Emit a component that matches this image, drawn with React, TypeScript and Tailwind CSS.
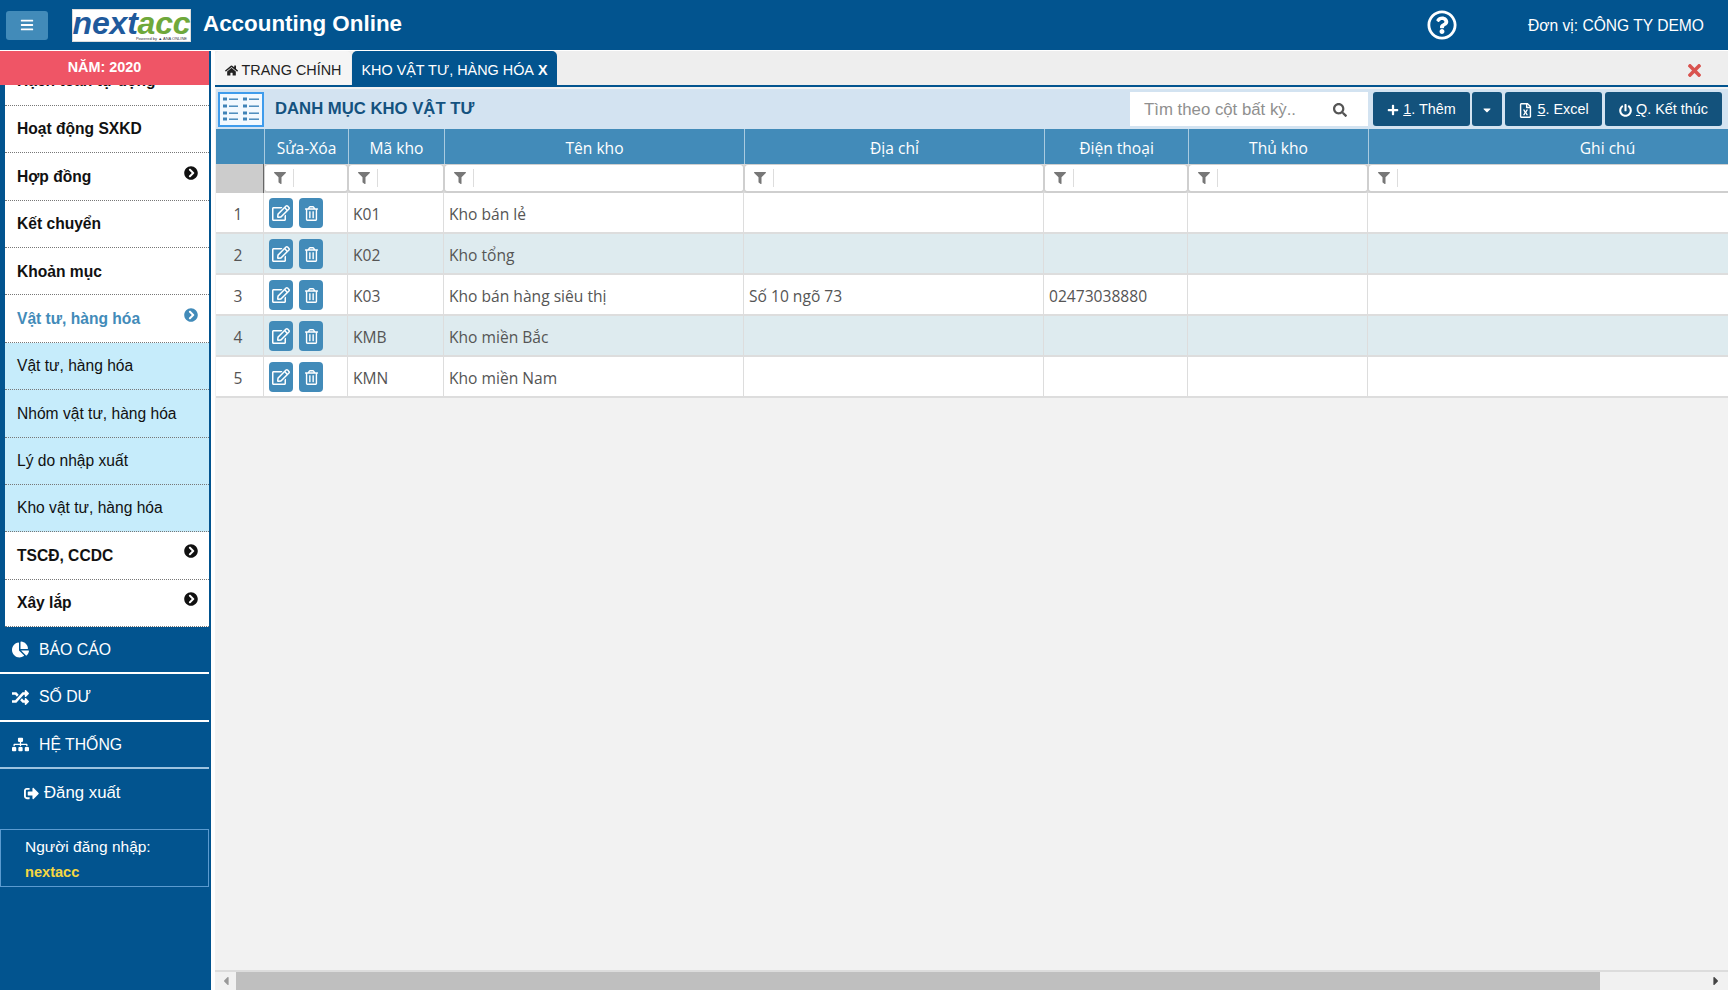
import React from "react";
import {
  FaBars, FaHome, FaPlus, FaPowerOff, FaSearch, FaTimes, FaFilter, FaChevronCircleRight,
  FaChartPie, FaRandom, FaSitemap, FaSignOutAlt, FaRegEdit, FaRegTrashAlt, FaRegFileExcel,
  FaRegQuestionCircle, FaCaretDown, FaCaretLeft, FaCaretRight,
} from "react-icons/fa";

const arial = "font-['Liberation_Sans',Arial,sans-serif]";
const grid = "grid grid-cols-[48px_84px_96px_300px_300px_144px_180px_478px] w-[1630px]";
const rowGrid = "grid grid-cols-[47px_84px_96px_300px_300px_144px_180px_479px] w-[1630px]";

const menu: { label: string; arrow?: boolean; active?: boolean; sub?: boolean }[] = [
  { label: "Hoạt động SXKD" },
  { label: "Hợp đồng", arrow: true },
  { label: "Kết chuyển" },
  { label: "Khoản mục" },
  { label: "Vật tư, hàng hóa", arrow: true, active: true },
  { label: "Vật tư, hàng hóa", sub: true },
  { label: "Nhóm vật tư, hàng hóa", sub: true },
  { label: "Lý do nhập xuất", sub: true },
  { label: "Kho vật tư, hàng hóa", sub: true },
  { label: "TSCĐ, CCDC", arrow: true },
  { label: "Xây lắp", arrow: true },
];

const sections = [
  { label: "BÁO CÁO", Icon: FaChartPie },
  { label: "SỐ DƯ", Icon: FaRandom },
  { label: "HỆ THỐNG", Icon: FaSitemap },
];

const columns = ["", "Sửa-Xóa", "Mã kho", "Tên kho", "Địa chỉ", "Điện thoại", "Thủ kho", "Ghi chú"];

const rows = [
  ["K01", "Kho bán lẻ", "", ""],
  ["K02", "Kho tổng", "", ""],
  ["K03", "Kho bán hàng siêu thị", "Số 10 ngõ 73", "02473038880"],
  ["KMB", "Kho miền Bắc", "", ""],
  ["KMN", "Kho miền Nam", "", ""],
];

function MenuRow({ item }: { item: (typeof menu)[number] }) {
  const tone = item.sub
    ? "bg-[#c6ecfb] text-[#111] font-normal"
    : item.active
      ? "bg-white text-[#428bb9] font-bold"
      : "bg-white text-[#111] font-bold";
  return (
    <div className={`h-[47.36px] flex items-center justify-between pl-3 pr-[11px] border-b border-dotted border-[#777] text-[15.6px] ${tone}`}>
      <span>{item.label}</span>
      {item.arrow && <FaChevronCircleRight className="text-[14px] -mt-2" />}
    </div>
  );
}

function Sidebar() {
  return (
    <aside className={`w-[211px] shrink-0 bg-[#02548f] flex flex-col ${arial}`}>
      <div className="h-[34px] shrink-0 w-[209px] bg-[#ef5566] text-white font-bold text-[14.4px] flex items-center justify-center">
        NĂM: 2020
      </div>
      <div className="ml-[5px] w-[204px] h-[542px] shrink-0 overflow-hidden">
        <div className="h-[21px] overflow-hidden flex items-end pl-3 border-b border-dotted border-[#777] bg-white text-[15.6px] font-bold text-[#111]">
          <span className="leading-[18px] mb-[15px] whitespace-nowrap">Hạch toán tự động</span>
        </div>
        {menu.map((m, i) => (
          <MenuRow key={i} item={m} />
        ))}
      </div>
      <div className="w-[209px]">
        {sections.map(({ label, Icon }, i) => (
          <div
            key={label}
            className={`h-[47.36px] flex items-center pl-3 text-white text-[15.8px] border-b-2 ${i === 2 ? "border-[#9cc3e0]" : "border-white"}`}
          >
            <Icon className="text-[17px] w-[17px] mr-[10px]" />
            <span>{label}</span>
          </div>
        ))}
      </div>
      <div className="h-[48px] pl-6 flex items-center text-white text-[16.8px] gap-[5px]">
        <FaSignOutAlt className="text-[15px]" />
        <span>Đăng xuất</span>
      </div>
      <div className="mt-[12px] w-[209px] h-[58px] border border-[#5b9bd0] pl-[24px] text-[15.5px] text-white">
        <div className="mt-[7px] leading-[20px]">Người đăng nhập:</div>
        <div className="mt-[6px] leading-[18px] text-[14.6px] font-bold text-[#f5d742]">nextacc</div>
      </div>
    </aside>
  );
}

function ListIcon() {
  return (
    <div className="w-[46px] h-[35px] bg-[#f2f9ff] border-2 border-[#3f9cec] flex items-center justify-center shrink-0">
      <svg width="38" height="26" viewBox="0 0 38 26" fill="#3f83b8">
        {[3, 10, 17, 23].map((y) => (
          <g key={y}>
            <rect x="1" y={y - 1.5} width="4" height="3" />
            <rect x="7" y={y - 0.5} width="9" height="1.4" />
            <rect x="21" y={y - 1.5} width="4" height="3" />
            <rect x="27" y={y - 0.5} width="10" height="1.4" />
          </g>
        ))}
      </svg>
    </div>
  );
}

function ToolBtn({ children, className = "" }: { children: React.ReactNode; className?: string }) {
  return (
    <button className={`h-[34px] rounded-[3px] bg-[#13527c] text-white text-[14.4px] flex items-center justify-center pt-[2px] ${className}`}>
      {children}
    </button>
  );
}

function Toolbar() {
  return (
    <div className={`mt-[2px] ml-[1px] h-[40px] bg-[#d3e3f1] flex items-center pl-[2px] pr-[6px] ${arial}`}>
      <ListIcon />
      <h1 className="ml-[11px] text-[16.7px] font-bold text-[#14527f]">DANH MỤC KHO VẬT TƯ</h1>
      <div className="ml-auto w-[238px] h-[34px] bg-white flex items-center justify-between pt-[2px] pl-[14px] pr-[21px] text-[16.8px] text-[#8f8f8f]">
        <span>Tìm theo cột bất kỳ..</span>
        <FaSearch className="text-[14px] text-[#555]" />
      </div>
      <ToolBtn className="ml-[5px] w-[97px] gap-[4px]">
        <FaPlus className="text-[12px]" />
        <span><u>1</u>. Thêm</span>
      </ToolBtn>
      <ToolBtn className="ml-[2px] w-[30px]">
        <FaCaretDown className="text-[12px]" />
      </ToolBtn>
      <ToolBtn className="ml-[3px] w-[97px] gap-[4px]">
        <FaRegFileExcel className="text-[15px]" />
        <span><u>5</u>. Excel</span>
      </ToolBtn>
      <ToolBtn className="ml-[3px] w-[117px] gap-[4px]">
        <FaPowerOff className="text-[13px]" />
        <span><u>Q</u>. Kết thúc</span>
      </ToolBtn>
    </div>
  );
}

function DataTable() {
  return (
    <div className="ml-[1px] font-['Open_Sans',sans-serif] text-[15.6px] overflow-hidden">
      <div className={`${grid} h-[35px] bg-[#428bb9] text-white`}>
        {columns.map((c, i) => (
          <div key={i} className={`flex items-center justify-center pt-[4px] ${i ? "border-l border-[#a9cbe0]" : ""}`}>{c}</div>
        ))}
      </div>
      <div className={`${grid} h-[29px] bg-[#d9d9d9]`}>
        {columns.map((_, i) =>
          i === 0 ? (
            <div key={i} className="bg-[#cccccc] border-r border-[#666]" />
          ) : (
            <div key={i} className="bg-white rounded-[4px] border border-[#cfcfcf] border-b-2 flex items-center pl-[9px]">
              <FaFilter className="text-[12px] text-[#777]" />
              <span className="ml-[7px] w-px h-[18px] bg-[#ddd]" />
            </div>
          ),
        )}
      </div>
      {rows.map((r, i) => (
        <div key={i} className={`${rowGrid} h-[41px] border-b-2 border-[#dddddd] text-[#555] ${i % 2 ? "bg-[#deebef]" : "bg-white"}`}>
          <div className="flex items-center justify-center pr-[3px] pt-[4px]">{i + 1}</div>
          <div className="flex items-center pl-[5px] gap-[6px] border-l border-[#dddddd] pt-[1px]">
            <button className="w-[24px] h-[30px] rounded-[4px] bg-[#428bb9] text-white flex items-center justify-center">
              <FaRegEdit className="text-[18px]" />
            </button>
            <button className="w-[24px] h-[30px] rounded-[4px] bg-[#428bb9] text-white flex items-center justify-center">
              <FaRegTrashAlt className="text-[15px]" />
            </button>
          </div>
          <div className="flex items-center pl-[5px] pt-[4px] border-l border-[#dddddd]">{r[0]}</div>
          <div className="flex items-center pl-[5px] pt-[4px] border-l border-[#dddddd]">{r[1]}</div>
          <div className="flex items-center pl-[5px] pt-[4px] border-l border-[#dddddd]">{r[2]}</div>
          <div className="flex items-center pl-[5px] pt-[4px] border-l border-[#dddddd]">{r[3]}</div>
          <div className="border-l border-[#dddddd]" />
          <div className="border-l border-[#dddddd]" />
        </div>
      ))}
    </div>
  );
}

export default function App() {
  return (
    <div className={`w-[1728px] h-[990px] overflow-hidden flex flex-col bg-white ${arial}`}>
      <header className="h-[51px] shrink-0 bg-[#02548f] border-b border-white flex items-center text-white">
        <button className="ml-[6px] w-[42px] h-[29px] bg-[#428bb9] rounded-[3px] flex items-center justify-center pr-[1px]">
          <FaBars className="text-[14px]" />
        </button>
        <div className="ml-[24px] w-[119px] h-[33px] bg-white border border-[#ddd] flex flex-col items-center justify-center leading-none">
          <div className="font-bold italic text-[32px] leading-[26px] tracking-[-0.2px]">
            <span className="text-[#1f5a9c]">next</span>
            <span className="text-[#6fa83b]">acc</span>
          </div>
          <div className="self-end pr-[3px] text-[4px] leading-[5px] text-[#334]">Powered by ▲ ANA ONLINE</div>
        </div>
        <div className="ml-[12px] text-[22.4px] font-bold -mt-[2px]">Accounting Online</div>
        <FaRegQuestionCircle className="ml-auto text-[30px]" />
        <div className="ml-[71px] mr-[24px] text-[15.6px] mt-[2px]">Đơn vị: CÔNG TY DEMO</div>
      </header>
      <div className="flex-1 flex min-h-0">
        <Sidebar />
        <main className="flex-1 min-w-0 flex flex-col bg-[#f2f2f2] border-l-4 border-white">
          <div className="h-[36px] shrink-0 bg-[#eeeeee] border-b-2 border-[#02548f] flex items-end text-[14.4px]">
            <div className="h-[34px] w-[136px] pt-[5px] bg-[#f5f5f5] rounded-t-[5px] text-[#222] flex items-center justify-center gap-[4px]">
              <FaHome className="text-[13px]" />
              <span>TRANG CHÍNH</span>
            </div>
            <div className="ml-[1px] h-[34px] w-[205px] pt-[5px] bg-[#02548f] rounded-t-[5px] text-white flex items-center justify-center gap-[4px]">
              <span>KHO VẬT TƯ, HÀNG HÓA</span>
              <b>X</b>
            </div>
            <FaTimes className="ml-auto mr-[24px] mb-[5px] text-[19px] text-[#d9534f]" />
          </div>
          <Toolbar />
          <DataTable />
          <div className="flex-1" />
          <div className="h-[20px] shrink-0 border-t-2 border-[#dcdcdc] bg-[#f1f1f1] flex items-center">
            <div className="w-[21px] flex items-center justify-center text-[#999]">
              <FaCaretLeft className="text-[14px]" />
            </div>
            <div className="w-[1364px] h-full bg-[#bfbfbf]" />
            <div className="flex-1 flex items-center justify-end pr-[5px] text-[#444]">
              <FaCaretRight className="text-[14px]" />
            </div>
          </div>
        </main>
      </div>
    </div>
  );
}
